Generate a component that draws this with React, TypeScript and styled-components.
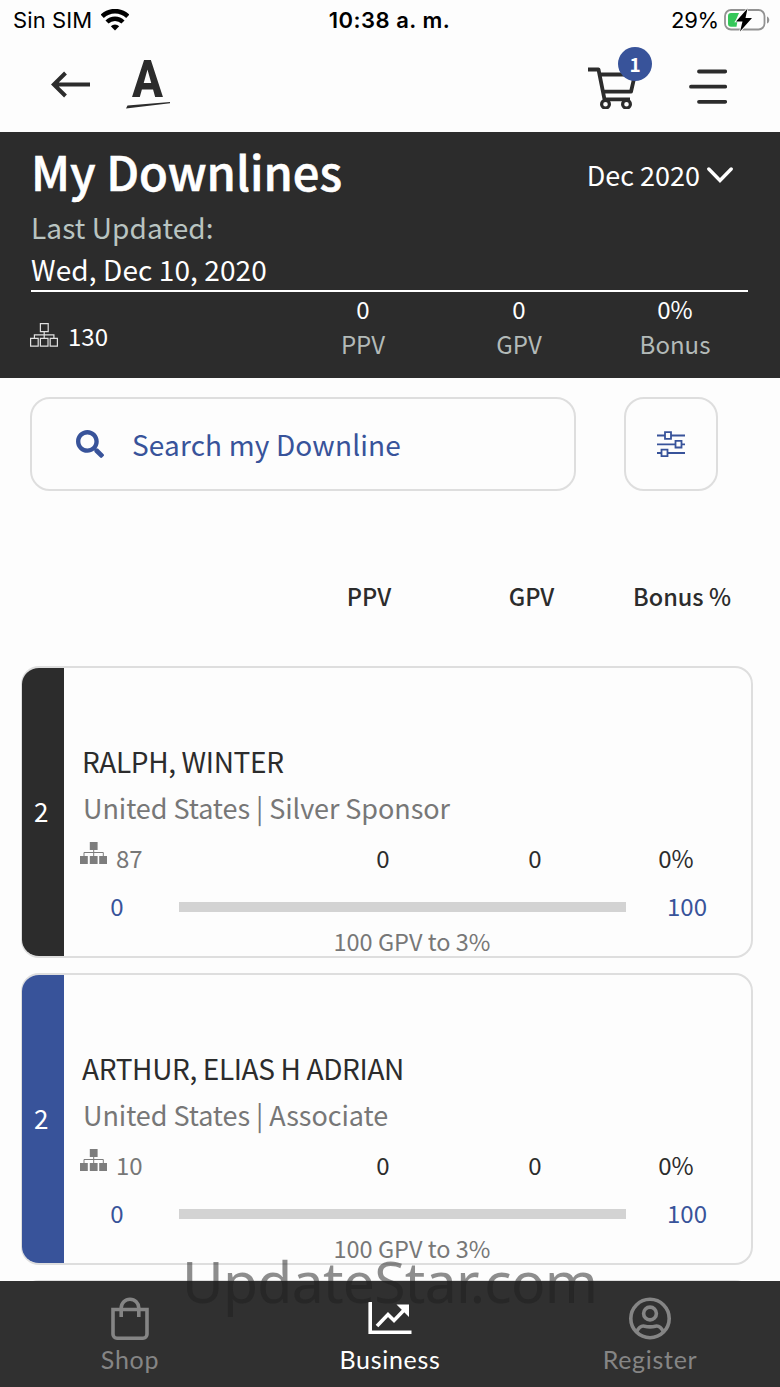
import styled, { createGlobalStyle } from "styled-components";
import { FaSearch } from "react-icons/fa";

const dark = "#2c2c2c";
const blue = "#38539a";
const grey = "#777777";
const border = "#dedede";
const fontBody = `"Noto Sans CJK SC", "Open Sans", sans-serif`;
const fontSystem = `Inter, "Liberation Sans", sans-serif`;

const GlobalStyle = createGlobalStyle`
  * {
    box-sizing: border-box;
  }
  body {
    margin: 0;
    background: #fdfdfd;
    color: ${dark};
    font-family: ${fontBody};
  }
  svg {
    display: block;
    flex-shrink: 0;
  }
`;

const Screen = styled.div`
  position: relative;
  width: 780px;
  height: 1387px;
  overflow: hidden;
`;

const StatusBar = styled.div`
  display: grid;
  grid-template-columns: 1fr auto 1fr;
  align-items: center;
  height: 40px;
  padding: 0 10px 0 13px;
  color: #000;
  font-family: ${fontSystem};
  font-size: 22px;
`;

const Carrier = styled.div`
  display: flex;
  align-items: center;
  gap: 9px;
  letter-spacing: 0.1px;
`;

const Clock = styled.div`
  margin-right: 4px;
  font-weight: 600;
  letter-spacing: 0.5px;
`;

const Battery = styled.div`
  display: flex;
  align-items: center;
  justify-content: flex-end;
  gap: 5px;
  letter-spacing: -0.2px;
`;

const Header = styled.header`
  display: flex;
  align-items: center;
  height: 92px;
  padding: 0 53px 0 51px;
`;

const Logo = styled.div`
  display: flex;
  flex-direction: column;
  align-items: center;
  width: 44px;
  height: 54px;
  margin-left: 35px;
`;

const LogoLetter = styled.span`
  height: 43px;
  font-family: Roboto, sans-serif;
  font-size: 52px;
  font-weight: 800;
  line-height: 42px;
  transform: scaleX(0.88);
`;

const CartButton = styled.div`
  position: relative;
  margin-left: auto;
  margin-right: 53px;
`;

const CartBadge = styled.span`
  position: absolute;
  top: -16px;
  left: 30px;
  width: 34px;
  height: 34px;
  border-radius: 50%;
  background: ${blue};
  color: #fff;
  font-size: 19px;
  font-weight: 700;
  line-height: 33px;
  text-align: center;
`;

const Hero = styled.section`
  height: 246px;
  padding: 0 32px 0 31px;
  background: ${dark};
  color: #fff;
`;

const TitleRow = styled.div`
  display: flex;
  align-items: center;
  justify-content: space-between;
  height: 78px;
`;

const Title = styled.h1`
  margin: 0;
  font-size: 47px;
  font-weight: 500;
  line-height: 78px;
  -webkit-text-stroke: 0.6px #fff;
`;

const Period = styled.div`
  display: flex;
  align-items: center;
  gap: 7px;
  padding: 8px 15px 0 0;
  font-size: 27px;
  line-height: 70px;
`;

const UpdatedLabel = styled.div`
  color: #b9c4c1;
  font-size: 28px;
  line-height: 35px;
  letter-spacing: 0.1px;
`;

const UpdatedDate = styled.div`
  height: 47px;
  padding-top: 3px;
  border-bottom: 2px solid #fff;
  font-size: 28px;
  line-height: 43px;
  letter-spacing: 0.1px;
`;

const HeroStats = styled.div`
  display: grid;
  grid-template-columns: 254px repeat(3, 156px);
  height: 86px;
  margin-top: -1px;
  font-size: 24px;
`;

const HeroCount = styled.div`
  display: flex;
  align-items: center;
  gap: 10px;
  margin-left: -1px;
  padding-top: 2px;
`;

const Stat = styled.div`
  line-height: 35px;
  text-align: center;
`;

const StatLabel = styled.div`
  color: #b3bab8;
`;

const SearchRow = styled.div`
  display: flex;
  gap: 48px;
  padding: 19px 0 0 30px;
`;

const SearchBox = styled.div`
  display: flex;
  align-items: center;
  gap: 28px;
  width: 546px;
  height: 94px;
  padding-left: 44px;
  border: 2px solid ${border};
  border-radius: 20px;
  color: ${blue};
  font-size: 28px;
  letter-spacing: 0.15px;
`;

const FilterButton = styled.div`
  display: flex;
  align-items: center;
  justify-content: center;
  width: 94px;
  height: 94px;
  border: 2px solid ${border};
  border-radius: 20px;
  color: ${blue};
`;

const ColumnHeads = styled.div`
  display: grid;
  grid-template-columns: 162px 163px 138px;
  height: 175px;
  padding: 79px 0 0 288px;
  font-size: 23.5px;
  font-weight: 500;
  line-height: 52px;
  text-align: center;
`;

const List = styled.div`
  display: flex;
  flex-direction: column;
  gap: 15px;
  padding: 0 27px 0 21px;
`;

const Card = styled.article`
  display: flex;
  width: 732px;
  height: 292px;
  border: 2px solid ${border};
  border-left-width: 1px;
  border-radius: 18px;
  overflow: hidden;
`;

const Level = styled.div<{ $color: string }>`
  flex-shrink: 0;
  width: 42px;
  padding-left: 12px;
  background: ${({ $color }) => $color};
  color: #fff;
  font-size: 26px;
  line-height: 285px;
`;

const CardBody = styled.div`
  flex: 1;
  padding-top: 70px;
`;

const Name = styled.div`
  padding-left: 18px;
  font-size: 28px;
  line-height: 46px;
  letter-spacing: -0.35px;
`;

const Region = styled.div`
  padding: 1px 0 0 19px;
  color: ${grey};
  font-size: 27px;
  line-height: 45px;
  letter-spacing: -0.07px;
`;

const Metrics = styled.div`
  display: grid;
  grid-template-columns: 243px 152px 152px 130px;
  font-size: 24px;
  line-height: 56px;
  text-align: center;
`;

const Count = styled.div`
  display: flex;
  gap: 9px;
  padding-left: 16px;
  color: ${grey};

  svg {
    margin-top: 12px;
  }
`;

const Progress = styled.div`
  display: grid;
  grid-template-columns: 106px 447px 104px;
  column-gap: 9px;
  align-items: center;
  color: ${blue};
  font-size: 24px;
  line-height: 40px;
  text-align: center;
`;

const Track = styled.div`
  height: 10px;
  margin-top: 2px;
  background: #d3d3d3;
`;

const Caption = styled.div`
  padding-left: 9px;
  color: ${grey};
  font-size: 23.5px;
  line-height: 30px;
  text-align: center;
`;

const TabBar = styled.nav`
  position: absolute;
  right: 0;
  bottom: 0;
  left: 0;
  display: grid;
  grid-template-columns: repeat(3, 1fr);
  height: 106px;
  background: #303030;
`;

const Tab = styled.div<{ $active?: boolean }>`
  display: flex;
  flex-direction: column;
  align-items: center;
  padding-top: 15px;
  color: ${({ $active }) => ($active ? "#fff" : "#858585")};
  font-family: Lato, sans-serif;
  font-size: 25px;
  line-height: 38px;
  letter-spacing: 0.7px;
`;

const Watermark = styled.div`
  position: absolute;
  top: 1241px;
  left: 182px;
  color: rgba(30, 30, 30, 0.5);
  font-family: "Noto Sans", sans-serif;
  font-size: 57px;
  line-height: 80px;
  letter-spacing: -0.7px;
  white-space: nowrap;
`;

const WifiIcon = () => (
  <svg width="28" height="22" viewBox="0 0 28 22" fill="none" stroke="#000">
    <path d="M1.2 7.3a18.4 18.4 0 0 1 25.6 0" strokeWidth="4.6" />
    <path d="M6 13a11.4 11.4 0 0 1 16 0" strokeWidth="4.4" />
    <path d="M9.8 17.3a6 6 0 0 1 8.4 0L14 21.5z" fill="#000" stroke="none" />
  </svg>
);

const BatteryIcon = () => (
  <svg width="46" height="24" viewBox="0 0 46 24">
    <rect x="1" y="2" width="39.5" height="19.5" rx="6" fill="none" stroke="#929292" strokeWidth="1.8" />
    <path d="M43 8.5v7c3-1 3-6 0-7z" fill="#929292" />
    <path d="M7 5h8l-3.5 8h2l-1 5.8H7a3 3 0 0 1-3-3V8a3 3 0 0 1 3-3z" fill="#35c759" />
    <path d="M23.5.5 12 13.5h6.5L16 23.5l12-13.5h-6.5z" fill="#000" stroke="#fdfdfd" strokeWidth="1.6" paintOrder="stroke" />
  </svg>
);

const BackIcon = () => (
  <svg width="40" height="30" viewBox="0 0 40 30" fill="none" stroke={dark} strokeWidth="4">
    <path d="M39 13.5H3M14.5 2 2.8 13.5 14.5 25" />
  </svg>
);

const CartIcon = () => (
  <svg width="48" height="46" viewBox="0 0 48 46" fill="none" stroke={dark} strokeWidth="3.8">
    <path d="M0 6.5h10.5l6 29.8H42M12 11.5h35l-4 17.2H15" strokeLinejoin="round" />
    <circle cx="17.5" cy="41.2" r="3.9" fill="#fdfdfd" strokeWidth="3.2" />
    <circle cx="38.5" cy="41.2" r="3.9" fill="#fdfdfd" strokeWidth="3.2" />
  </svg>
);

const MenuIcon = () => (
  <svg width="38" height="36" viewBox="0 0 38 36" stroke={dark} strokeWidth="3.8" strokeLinecap="round">
    <path d="M10 3.5h26.2M2 18.7h34.2M10 33.8h26.2" />
  </svg>
);

const ChevronIcon = () => (
  <svg width="26" height="18" viewBox="0 0 26 18" fill="none" stroke="#fff" strokeWidth="3.4">
    <path d="M1.8 3 13 14.5 24.2 3" strokeLinecap="round" />
  </svg>
);

const TreeOutlineIcon = () => (
  <svg width="28" height="24" viewBox="0 0 28 24" fill="none" stroke="#e0e0e0" strokeWidth="1.2">
    <path d="M10.4.6h7.8v8h-7.8zM.6 15.3h7.6v7.9H.6zM10.4 15.3h7.6v7.9h-7.6zM20.2 15.3h7.2v7.9h-7.2z" />
    <path d="M14.2 8.6v6.7M4.4 15.3v-3.5h19.5v3.5" />
  </svg>
);

const TreeIcon = () => (
  <svg width="27" height="22" viewBox="0 0 27 22" fill="#7d7d7d">
    <path d="M9.8 0h7.8v8H9.8zM0 14h7.8v8H0zM9.8 14h7.8v8H9.8zM19.2 14H27v8h-7.8z" />
    <path d="M13.7 8v6M4 14v-3.5h19.3V14" fill="none" stroke="#7d7d7d" />
  </svg>
);

const SlidersIcon = () => (
  <svg width="28" height="26" viewBox="0 0 28 26" fill="none" stroke="currentColor" strokeWidth="1.8">
    <path d="M0 4.5h8M14 4.5h14M0 13.3h18.5M24.5 13.3H28M0 22h4.5M10.5 22H28" />
    <path d="M8 1.2h6v6.6H8zM18.5 9.9h6v6.6h-6zM4.5 18.6h6v6.6h-6z" />
  </svg>
);

const BagIcon = () => (
  <svg width="44" height="44" viewBox="0 0 44 44" fill="none" stroke="currentColor" strokeWidth="3.6">
    <path d="M5 13.5h34v24.7a4 4 0 0 1-4 4H9a4 4 0 0 1-4-4z" />
    <path d="M13.2 21v-9a8.8 8.8 0 0 1 17.6 0v9" />
  </svg>
);

const ChartIcon = () => (
  <svg width="44" height="44" viewBox="0 0 44 44" fill="none" stroke="currentColor" strokeWidth="3.6">
    <path d="M2.2 6v30.2h41.3" />
    <path d="m9 30 11-11.5 6 6L38 12" />
    <path d="M28.5 8.5H41V21z" fill="currentColor" stroke="none" />
  </svg>
);

const PersonIcon = () => (
  <svg width="44" height="44" viewBox="0 0 44 44" fill="none" stroke="currentColor" strokeWidth="3.6">
    <circle cx="22" cy="22.5" r="19.2" />
    <circle cx="22" cy="17.5" r="6.4" />
    <path d="M8.5 36c2-4 5-6.5 8-5.8 4 1 7 1 11 0 3-.7 6 1.8 8 5.8" />
  </svg>
);

type Member = {
  name: string;
  region: string;
  count: number;
  color: string;
};

const members: Member[] = [
  {
    name: "RALPH, WINTER",
    region: "United States | Silver Sponsor",
    count: 87,
    color: dark,
  },
  {
    name: "ARTHUR, ELIAS H ADRIAN",
    region: "United States | Associate",
    count: 10,
    color: blue,
  },
];

const MemberCard = ({ name, region, count, color }: Member) => (
  <Card>
    <Level $color={color}>2</Level>
    <CardBody>
      <Name>{name}</Name>
      <Region>{region}</Region>
      <Metrics>
        <Count>
          <TreeIcon />
          {count}
        </Count>
        <span>0</span>
        <span>0</span>
        <span>0%</span>
      </Metrics>
      <Progress>
        <span>0</span>
        <Track />
        <span>100</span>
      </Progress>
      <Caption>100 GPV to 3%</Caption>
    </CardBody>
  </Card>
);

const App = () => {
  return (
    <>
      <GlobalStyle />
      <Screen>
        <StatusBar>
          <Carrier>
            Sin SIM
            <WifiIcon />
          </Carrier>
          <Clock>10:38 a. m.</Clock>
          <Battery>
            29%
            <BatteryIcon />
          </Battery>
        </StatusBar>
        <Header>
          <BackIcon />
          <Logo>
            <LogoLetter>A</LogoLetter>
            <svg width="44" height="7" viewBox="0 0 44 7">
              <path d="M1.5 3.5 44 0v1.2L0 6.5z" fill={dark} />
            </svg>
          </Logo>
          <CartButton>
            <CartIcon />
            <CartBadge>1</CartBadge>
          </CartButton>
          <MenuIcon />
        </Header>
        <Hero>
          <TitleRow>
            <Title>My Downlines</Title>
            <Period>
              Dec 2020
              <ChevronIcon />
            </Period>
          </TitleRow>
          <UpdatedLabel>Last Updated:</UpdatedLabel>
          <UpdatedDate>Wed, Dec 10, 2020</UpdatedDate>
          <HeroStats>
            <HeroCount>
              <TreeOutlineIcon />
              130
            </HeroCount>
            <Stat>
              0<StatLabel>PPV</StatLabel>
            </Stat>
            <Stat>
              0<StatLabel>GPV</StatLabel>
            </Stat>
            <Stat>
              0%<StatLabel>Bonus</StatLabel>
            </Stat>
          </HeroStats>
        </Hero>
        <SearchRow>
          <SearchBox>
            <FaSearch size={28} />
            Search my Downline
          </SearchBox>
          <FilterButton>
            <SlidersIcon />
          </FilterButton>
        </SearchRow>
        <ColumnHeads>
          <span>PPV</span>
          <span>GPV</span>
          <span>Bonus %</span>
        </ColumnHeads>
        <List>
          {members.map((member) => (
            <MemberCard key={member.name} {...member} />
          ))}
          <Card>
            <Level $color={dark} />
          </Card>
        </List>
        <TabBar>
          <Tab>
            <BagIcon />
            Shop
          </Tab>
          <Tab $active>
            <ChartIcon />
            Business
          </Tab>
          <Tab>
            <PersonIcon />
            Register
          </Tab>
        </TabBar>
        <Watermark>UpdateStar.com</Watermark>
      </Screen>
    </>
  );
};

export default App;
